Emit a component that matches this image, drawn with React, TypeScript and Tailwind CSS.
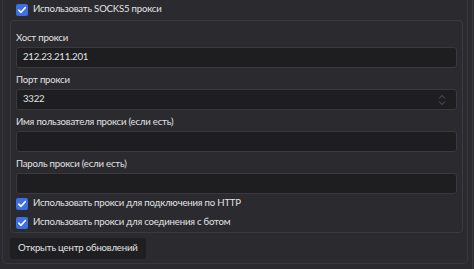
import type { ReactNode } from "react";

function Check({ label }: { label: string }) {
  return (
    <div className="flex h-[19px] items-center gap-[5px]">
      <span className="flex h-[12px] w-[12px] items-center justify-center rounded-[2px] bg-[#3b6fe3]">
        <svg width="10" height="10" viewBox="0 0 10 10" fill="none">
          <path d="M1.8 5.2 4 7.3 8.3 2.6" stroke="#ffffff" strokeWidth="1.6" strokeLinecap="round" strokeLinejoin="round" />
        </svg>
      </span>
      <span>{label}</span>
    </div>
  );
}

function Field({ label, children }: { label: string; children?: ReactNode }) {
  return (
    <div className="flex flex-col">
      <div className="mt-[2px] mb-[3px] h-[16px] leading-[19px]">{label}</div>
      <div className="flex h-[21px] items-center rounded-[3px] border border-[#3a393f] bg-[#1e1e20] pl-[6px] pr-[10px]">
        {children}
      </div>
    </div>
  );
}

export default function App() {
  return (
    <div className="h-[269px] w-[474px] overflow-hidden bg-[#2b2a2f] font-['Lato',sans-serif] text-[9.6px] tracking-[-0.2px] text-[#e2e2e4]">
      <div className="flex">
        <div className="ml-[2px] flex h-[264px] w-[466px] flex-col rounded-b-[5px] border-x border-b border-[#38373d] pl-[7px] pr-[4px]">
          <div className="h-[19px] pl-[6px]">
            <Check label="Использовать SOCKS5 прокси" />
          </div>
          <div className="mt-[1px] flex flex-col rounded-[4px] border border-[#3b3a40] px-[5px] pt-[5px]">
            <Field label="Хост прокси">
              <span>212.23.211.201</span>
            </Field>
            <Field label="Порт прокси">
              <span className="flex-1">3322</span>
              <svg width="8" height="12" viewBox="0 0 8 12" fill="none">
                <path d="M1 4.5 4 1.5 7 4.5M1 7.5 4 10.5 7 7.5" stroke="#5d5c63" strokeWidth="1" />
              </svg>
            </Field>
            <Field label="Имя пользователя прокси (если есть)" />
            <Field label="Пароль прокси (если есть)" />
            <Check label="Использовать прокси для подключения по HTTP" />
            <Check label="Использовать прокси для соединения с ботом" />
          </div>
          <div className="mt-[5px]">
            <button className="h-[21px] rounded-[3px] bg-[#1f1f22] px-[8px] text-[#e2e2e4]">
              Открыть центр обновлений
            </button>
          </div>
        </div>
        <div className="ml-[4px] h-[269px] border-l border-[#38373d]" />
      </div>
    </div>
  );
}
